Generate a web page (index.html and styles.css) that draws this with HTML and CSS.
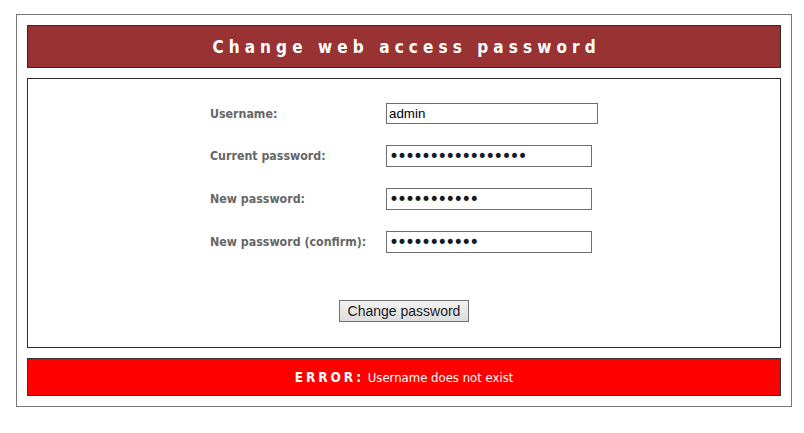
FILE: index.html
```html
<!DOCTYPE html>
<html>
<head>
<meta charset="utf-8">
<title>Change web access password</title>
<link rel="stylesheet" href="styles.css">
</head>
<body>
<div class="frame">
  <div class="title-bar">Change web access password</div>
  <form class="form-box">
    <div class="fields">
      <label class="label" for="u">Username:</label>
      <input class="field field-wide" id="u" type="text" value="admin">
      <label class="label" for="c">Current password:</label>
      <input class="field field-pw" id="c" type="password" value="aaaaaaaaaaaaaaaaa">
      <label class="label" for="n">New password:</label>
      <input class="field field-pw" id="n" type="password" value="aaaaaaaaaaa">
      <label class="label" for="n2">New password (confirm):</label>
      <input class="field field-pw" id="n2" type="password" value="aaaaaaaaaaa">
    </div>
    <div class="actions">
      <button class="btn" type="button">Change password</button>
    </div>
  </form>
  <div class="error-bar"><span class="error-tag">ERROR:</span> Username does not exist</div>
</div>
</body>
</html>
```
FILE: styles.css
```css
html, body {
  margin: 0;
  padding: 0;
  background: #ffffff;
}
body {
  padding: 14px 0 0 16px;
  font-family: "DejaVu Sans Condensed", "DejaVu Sans", sans-serif;
}
.frame {
  width: 754px;
  padding: 10px;
  border: 1px solid #777777;
  display: flex;
  flex-direction: column;
  gap: 10px;
}
.title-bar {
  height: 41px;
  border: 1px solid #2b2b2b;
  background: #993333;
  color: #ffffff;
  font-weight: bold;
  font-size: 17px;
  letter-spacing: 0.3em;
  display: flex;
  align-items: center;
  justify-content: center;
  padding-left: 0.3em;
}
.form-box {
  margin: 0;
  border: 1px solid #2b2b2b;
  padding: 24px 0 25px;
  display: flex;
  flex-direction: column;
  align-items: center;
}
.fields {
  display: grid;
  grid-template-columns: 176px 212px;
  grid-template-rows: 21px 22px 22px 22px;
  row-gap: 21px;
  align-items: center;
}
.label {
  font-weight: bold;
  font-size: 12.3px;
  color: #666666;
}
.field {
  box-sizing: border-box;
  height: 22px;
  margin: 0;
  border: 1px solid #6e6e6e;
  padding: 1px 2px;
  font-family: "Liberation Sans", Arial, sans-serif;
  font-size: 13.33px;
  color: #000000;
  outline: none;
}
.field-wide {
  width: 212px;
  height: 21px;
}
.field-pw {
  width: 206px;
  padding: 0 2px;
  font-family: "DejaVu Sans", sans-serif;
  font-size: 17px;
  letter-spacing: -2px;
  color: #1a1a1a;
}
.actions {
  margin-top: 47px;
}
.btn {
  box-sizing: border-box;
  width: 130px;
  height: 22px;
  margin: 0;
  padding: 0;
  border: 1px solid #707070;
  background: linear-gradient(#f2f2f2, #dddddd);
  font-family: "Liberation Sans", Arial, sans-serif;
  font-size: 14px;
  color: #1a1a1a;
}
.error-bar {
  height: 36px;
  border: 1px solid #333333;
  background: #ff0000;
  color: #ffffff;
  font-size: 13px;
  display: flex;
  align-items: center;
  justify-content: center;
  white-space: pre;
}
.error-tag {
  font-weight: bold;
  font-size: 13.5px;
  letter-spacing: 0.22em;
}
```
